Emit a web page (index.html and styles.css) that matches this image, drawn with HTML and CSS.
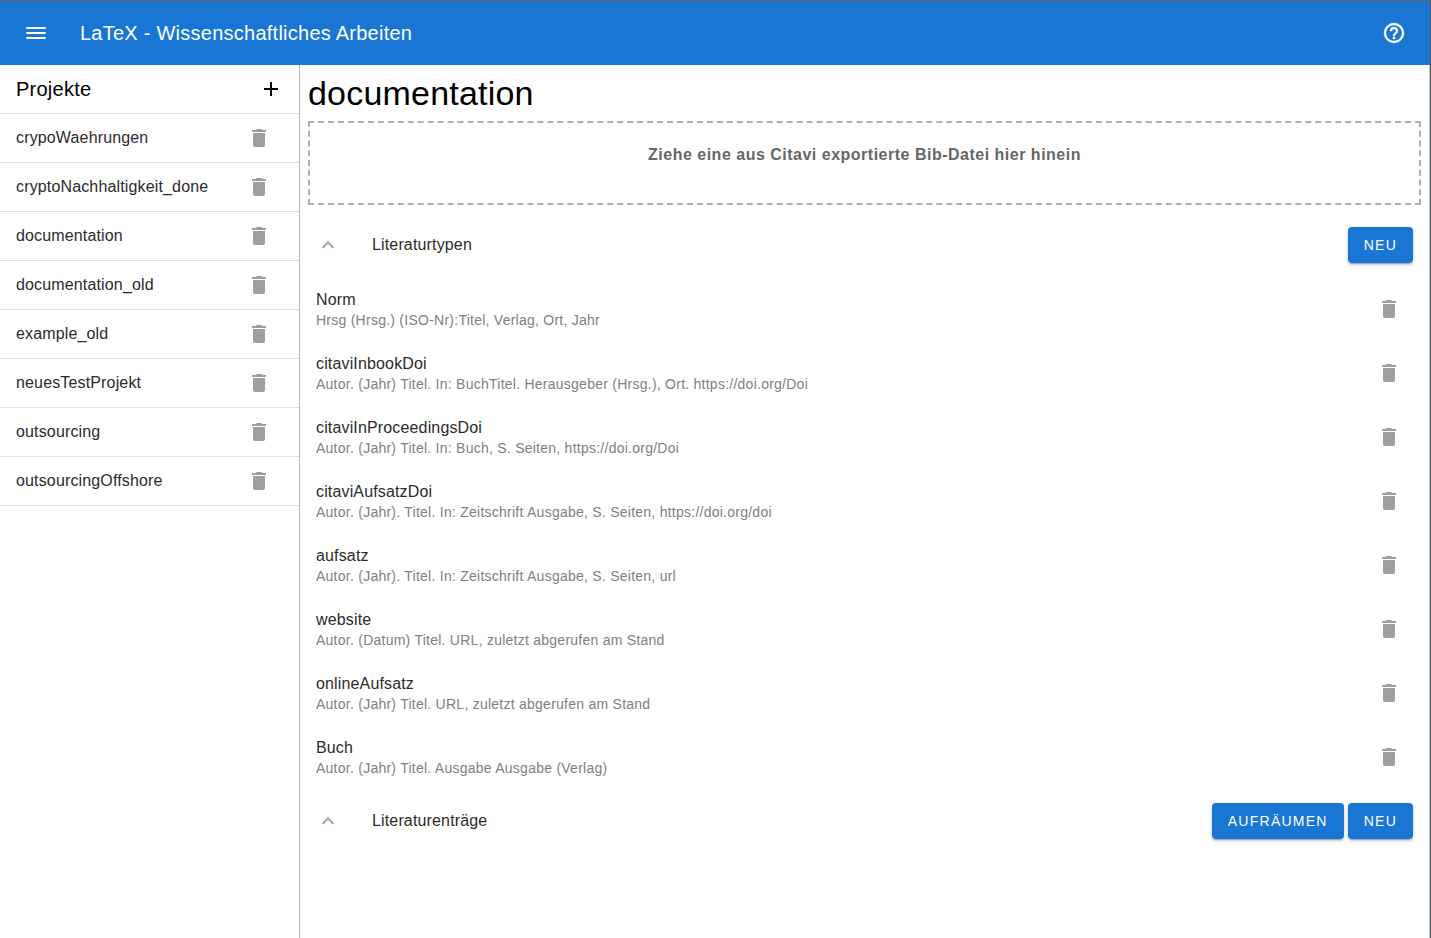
FILE: index.html
```html
<!DOCTYPE html>
<html lang="de">
<head>
<meta charset="utf-8">
<title>LaTeX - Wissenschaftliches Arbeiten</title>
<link rel="stylesheet" href="styles.css">
</head>
<body>
<svg class="defs" width="0" height="0">
  <symbol id="trash" viewBox="0 0 24 24"><path d="M19 4h-3.5l-1-1h-5l-1 1H5v2h14M6 19a2 2 0 0 0 2 2h8a2 2 0 0 0 2-2V7H6v12Z"/></symbol>
  <symbol id="up" viewBox="0 0 24 24"><path d="M7.41 15.41 12 10.83l4.59 4.58L18 14l-6-6-6 6 1.41 1.41Z"/></symbol>
</svg>
<div class="app">
  <header class="bar">
    <svg class="icon" viewBox="0 0 24 24"><path d="M2.3 6h19.4v2H2.3V6m0 5h19.4v2H2.3v-2m0 5h19.4v2H2.3v-2Z"/></svg>
    <h1 class="bar-title">LaTeX - Wissenschaftliches Arbeiten</h1>
    <svg class="icon help" viewBox="0 0 24 24"><path d="M11 18h2v-2h-2v2m1-16A10 10 0 0 0 2 12a10 10 0 0 0 10 10 10 10 0 0 0 10-10A10 10 0 0 0 12 2m0 18c-4.41 0-8-3.59-8-8s3.59-8 8-8 8 3.59 8 8-3.59 8-8 8m0-14a4 4 0 0 0-4 4h2a2 2 0 0 1 2-2 2 2 0 0 1 2 2c0 2-3 1.75-3 5h2c0-2.25 3-2.5 3-5a4 4 0 0 0-4-4Z"/></svg>
  </header>
  <div class="body">
    <nav class="side">
      <div class="side-head"><span>Projekte</span><svg class="plus" viewBox="0 0 24 24"><path d="M19 13h-6v6h-2v-6H5v-2h6V5h2v6h6v2Z"/></svg></div>
      <div class="project"><span>crypoWaehrungen</span><svg class="trash"><use href="#trash"/></svg></div>
      <div class="project"><span>cryptoNachhaltigkeit_done</span><svg class="trash"><use href="#trash"/></svg></div>
      <div class="project"><span>documentation</span><svg class="trash"><use href="#trash"/></svg></div>
      <div class="project"><span>documentation_old</span><svg class="trash"><use href="#trash"/></svg></div>
      <div class="project"><span>example_old</span><svg class="trash"><use href="#trash"/></svg></div>
      <div class="project"><span>neuesTestProjekt</span><svg class="trash"><use href="#trash"/></svg></div>
      <div class="project"><span>outsourcing</span><svg class="trash"><use href="#trash"/></svg></div>
      <div class="project"><span>outsourcingOffshore</span><svg class="trash"><use href="#trash"/></svg></div>
    </nav>
    <main class="main">
      <h2 class="heading">documentation</h2>
      <div class="drop">Ziehe eine aus Citavi exportierte Bib-Datei hier hinein</div>
      <section class="group first">
        <div class="group-head"><svg class="up"><use href="#up"/></svg><span class="group-title">Literaturtypen</span><button class="btn">Neu</button></div>
        <div class="entry"><div><div class="name">Norm</div><div class="sub">Hrsg (Hrsg.) (ISO-Nr):Titel, Verlag, Ort, Jahr</div></div><svg class="trash"><use href="#trash"/></svg></div>
        <div class="entry"><div><div class="name">citaviInbookDoi</div><div class="sub">Autor. (Jahr) Titel. In: BuchTitel. Herausgeber (Hrsg.), Ort. https://doi.org/Doi</div></div><svg class="trash"><use href="#trash"/></svg></div>
        <div class="entry"><div><div class="name">citaviInProceedingsDoi</div><div class="sub">Autor. (Jahr) Titel. In: Buch, S. Seiten, https://doi.org/Doi</div></div><svg class="trash"><use href="#trash"/></svg></div>
        <div class="entry"><div><div class="name">citaviAufsatzDoi</div><div class="sub">Autor. (Jahr). Titel. In: Zeitschrift Ausgabe, S. Seiten, https://doi.org/doi</div></div><svg class="trash"><use href="#trash"/></svg></div>
        <div class="entry"><div><div class="name">aufsatz</div><div class="sub">Autor. (Jahr). Titel. In: Zeitschrift Ausgabe, S. Seiten, url</div></div><svg class="trash"><use href="#trash"/></svg></div>
        <div class="entry"><div><div class="name">website</div><div class="sub">Autor. (Datum) Titel. URL, zuletzt abgerufen am Stand</div></div><svg class="trash"><use href="#trash"/></svg></div>
        <div class="entry"><div><div class="name">onlineAufsatz</div><div class="sub">Autor. (Jahr) Titel. URL, zuletzt abgerufen am Stand</div></div><svg class="trash"><use href="#trash"/></svg></div>
        <div class="entry"><div><div class="name">Buch</div><div class="sub">Autor. (Jahr) Titel. Ausgabe Ausgabe (Verlag)</div></div><svg class="trash"><use href="#trash"/></svg></div>
      </section>
      <section class="group">
        <div class="group-head"><svg class="up"><use href="#up"/></svg><span class="group-title">Literaturenträge</span><button class="btn">Aufräumen</button><button class="btn">Neu</button></div>
      </section>
    </main>
  </div>
</div>
</body>
</html>
```
FILE: styles.css
```css
* { box-sizing: border-box; }
body { margin: 0; background: #fff; font-family: "Liberation Sans", Arial, sans-serif; font-size: 16px; letter-spacing: .15px; color: #000; }
.defs { display: block; }
.app { height: 938px; display: flex; flex-direction: column; border-top: 1px solid #5f6368; border-right: 1px solid #53565c; overflow: hidden; }
svg { flex: none; }
.bar { height: 64px; flex: none; display: flex; align-items: center; padding: 0 24px; background: #1976d2; color: #fff; }
.icon { width: 24px; height: 24px; fill: #fff; }
.help { stroke: #fff; stroke-width: .4; }
.bar-title { flex: 1; margin: 0 0 0 32px; font-size: 20px; font-weight: 400; line-height: 24px; letter-spacing: .25px; }
.body { flex: 1; display: flex; min-height: 0; border-right: 1px solid #c4c4c4; }
.side { width: 300px; flex: none; border-right: 1px solid #b4b4b4; }
.side-head { height: 49px; display: flex; align-items: center; justify-content: space-between; padding: 0 16px; border-bottom: 1px solid #e0e0e0; font-size: 20px; letter-spacing: .25px; }
.plus { width: 24px; height: 24px; fill: #000; }
.project { height: 49px; display: flex; align-items: center; justify-content: space-between; padding: 0 28px 0 16px; border-bottom: 1px solid #e0e0e0; color: #2b2b2b; }
.trash { width: 24px; height: 24px; fill: #9e9e9e; }
.main { flex: 1; padding: 8px 8px 0; }
.heading { margin: 0; height: 48px; line-height: 40px; font-size: 34px; font-weight: 400; letter-spacing: .2px; }
.drop { height: 84px; padding-top: 20px; border: 2px dashed #b0b0b0; text-align: center; font-weight: 700; line-height: 24px; letter-spacing: .5px; color: #666; }
.group.first { margin-top: 8px; }
.group-head { height: 64px; display: flex; align-items: center; gap: 4px; padding: 0 8px; color: #2b2b2b; }
.up { width: 24px; height: 24px; fill: #9e9e9e; }
.group-title { flex: 1; margin-left: 28px; }
.btn { height: 36px; padding: 0 16px; border: 0; border-radius: 4px; background: #1976d2; color: #fff; font-family: inherit; font-size: 14px; font-weight: 500; letter-spacing: 1.25px; text-transform: uppercase; box-shadow: 0 3px 1px -2px #0003, 0 2px 2px #0002, 0 1px 5px #0002; }
.entry { height: 64px; display: flex; align-items: center; justify-content: space-between; padding: 0 20px 0 8px; }
.name { padding-top: 1px; line-height: 22px; color: #2b2b2b; }
.sub { margin-top: -1px; font-size: 14px; line-height: 20px; letter-spacing: .25px; color: #808080; }
```
